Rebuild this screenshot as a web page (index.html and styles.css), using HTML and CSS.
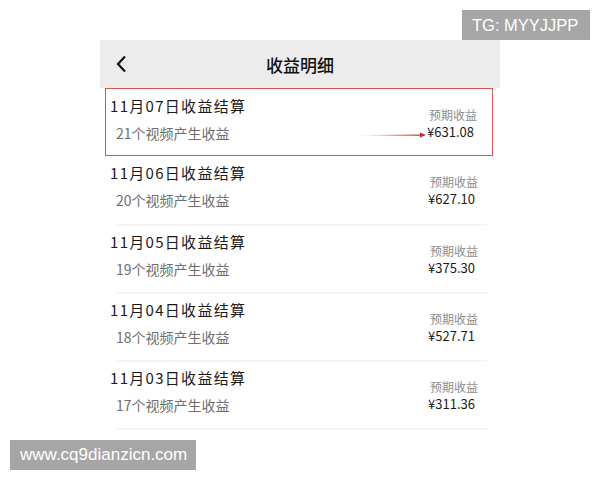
FILE: index.html
```html
<!DOCTYPE html>
<html>
    <head>
        <meta charset="utf-8">
        <title>收益明细</title>
        <link rel="stylesheet" href="styles.css">
    </head>
    <body>
        <div class="tag">TG: MYYJJPP</div>

        <div class="screen">
            <div class="topbar">
                <svg class="back" width="12" height="18" viewBox="0 0 12 18">
                    <path d="M10 1.5 L3 9 L10 16.5" fill="none" stroke="#111" stroke-width="2.2"/>
                </svg>
                <span class="title">收益明细</span>
            </div>

            <div class="list">
                <div class="row marked">
                    <div class="left">
                        <div class="day">11月07日收益结算</div>
                        <div class="count">21个视频产生收益</div>
                    </div>
                    <div class="right">
                        <div class="label">预期收益</div>
                        <div class="amount">¥631.08</div>
                    </div>
                    <!-- pointer drawn onto the amount -->
                    <svg class="pointer" width="74" height="8" viewBox="0 0 74 8">
                        <defs>
                            <linearGradient id="fade" x1="0" x2="1" y1="0" y2="0">
                                <stop offset="0" stop-color="#c8302a" stop-opacity="0"/>
                                <stop offset="0.6" stop-color="#c8302a" stop-opacity="0.8"/>
                                <stop offset="1" stop-color="#c8302a"/>
                            </linearGradient>
                        </defs>
                        <path d="M0 4.2 L68 3.4 L68 4.8 Z" fill="url(#fade)"/>
                        <path d="M67 1.5 L73 4 L67 6.5 Z" fill="#c8302a"/>
                    </svg>
                </div>

                <div class="row">
                    <div class="left">
                        <div class="day">11月06日收益结算</div>
                        <div class="count">20个视频产生收益</div>
                    </div>
                    <div class="right">
                        <div class="label">预期收益</div>
                        <div class="amount">¥627.10</div>
                    </div>
                </div>

                <div class="row">
                    <div class="left">
                        <div class="day">11月05日收益结算</div>
                        <div class="count">19个视频产生收益</div>
                    </div>
                    <div class="right">
                        <div class="label">预期收益</div>
                        <div class="amount">¥375.30</div>
                    </div>
                </div>

                <div class="row">
                    <div class="left">
                        <div class="day">11月04日收益结算</div>
                        <div class="count">18个视频产生收益</div>
                    </div>
                    <div class="right">
                        <div class="label">预期收益</div>
                        <div class="amount">¥527.71</div>
                    </div>
                </div>

                <div class="row">
                    <div class="left">
                        <div class="day">11月03日收益结算</div>
                        <div class="count">17个视频产生收益</div>
                    </div>
                    <div class="right">
                        <div class="label">预期收益</div>
                        <div class="amount">¥311.36</div>
                    </div>
                </div>
            </div>
        </div>

        <div class="site">www.cq9dianzicn.com</div>
    </body>
</html>
```

FILE: styles.css
```css
body{
    margin: 0;
    background: #fff;
    font-family: "Noto Sans CJK SC", "Noto Sans", sans-serif;
    color: #1a1a1a;
}

.screen{
    width: 400px;
    margin: 40px auto 0;
}

.topbar{
    height: 48px;
    background-color: #ececec;
    display: flex;
    align-items: center;
    position: relative;
    padding-left: 15px;
}
.topbar .title{
    position: absolute;
    left: 0;
    right: 0;
    text-align: center;
    font-size: 17px;
    font-weight: 500;
    color: #111;
}

.row{
    height: 68px;
    box-sizing: border-box;
    margin: 0 7px 0 5px;
    padding: 6px 15px 0 5px;
    display: flex;
    justify-content: space-between;
    position: relative;
    background-image: linear-gradient(#f4f4f4, #f4f4f4);
    background-repeat: no-repeat;
    background-size: 370px 2px;
    background-position: 12px 100%;
}
.row.marked{
    border: 1.5px solid #d35750;
    padding-top: 7px;
    padding-left: 4px;
    background-image: none;
}
.row.marked + .row{
    height: 70px;
    padding-top: 7px;
}

.day{
    font-size: 15px;
    line-height: 20px;
    letter-spacing: 1.3px;
    color: #1a1a1a;
}
.count{
    margin-top: 7px;
    padding-left: 6px;
    font-size: 14px;
    line-height: 20px;
    color: #6e6e6e;
}

.right{
    text-align: right;
    padding-top: 11px;
}
.label{
    font-size: 12px;
    line-height: 16px;
    color: #8c8c8c;
}
.amount{
    margin-top: 0;
    padding-right: 3px;
    font-size: 13px;
    line-height: 18px;
    color: #1a1a1a;
}

.pointer{
    position: absolute;
    left: 247px;
    top: 42px;
}

.tag, .site{
    position: absolute;
    background-color: #a6a6a6;
    color: #fff;
    font-family: "Liberation Sans", Arial, sans-serif;
    line-height: 30px;
    padding: 0 10px;
}
.tag{
    top: 10px;
    left: 462px;
    width: 108px;
    font-size: 16.5px;
}
.site{
    top: 440px;
    left: 10px;
    width: 166px;
    font-size: 17px;
}
```
